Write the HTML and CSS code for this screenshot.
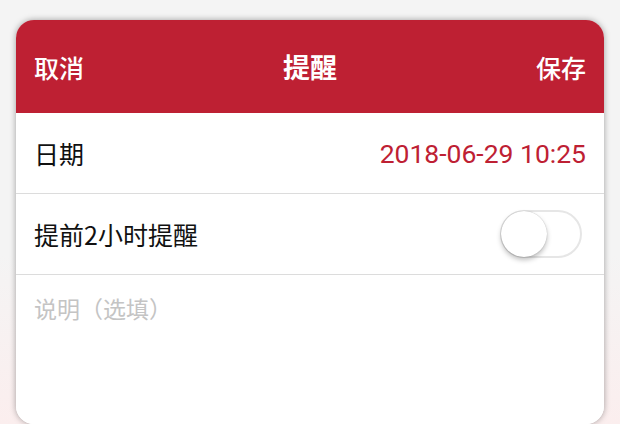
FILE: index.html
```html
<!DOCTYPE html>
<html lang="zh-CN">
<head>
  <meta charset="UTF-8" />
  <meta name="viewport" content="width=device-width, initial-scale=1" />
  <title>提醒</title>
  <link rel="stylesheet" href="styles.css">
</head>
<body>
  <div class="sheet">
    <div class="header">
      <button type="button" class="header-btn">取消</button>
      <h2>提醒</h2>
      <button type="button" class="header-btn">保存</button>
    </div>
    <div class="row">
      <span class="label">日期</span>
      <span class="date">2018-06-29 10:25</span>
    </div>
    <div class="row">
      <span class="label">提前2小时提醒</span>
      <label class="switch">
        <input type="checkbox" id="remind">
        <span class="knob"></span>
      </label>
    </div>
    <textarea class="note" placeholder="说明（选填）"></textarea>
  </div>
</body>
</html>
```

FILE: styles.css
```css
body {
  font-family: "Noto Sans CJK SC", "Noto Sans", sans-serif;
  margin: 0;
  padding: 20px 16px 0;
  background: linear-gradient(#f4f4f4 60%, #fbeeee);
  color: #111;
  height: 404px;
  overflow: hidden;
}
.sheet {
  background: #fff;
  border-radius: 18px;
  box-shadow: 0 0 6px rgba(0, 0, 0, 0.35);
  overflow: hidden;
  height: 404px;
  display: flex;
  flex-direction: column;
}
.header {
  background: #be2033;
  height: 93px;
  display: flex;
  align-items: center;
  justify-content: space-between;
  padding: 0 18px;
  color: #fff;
}
.header h2 {
  margin: 0;
  font-size: 27px;
  font-weight: 700;
}
.header-btn {
  background: none;
  border: none;
  padding: 0;
  color: #fff;
  font-family: inherit;
  font-size: 25px;
  font-weight: 500;
  cursor: pointer;
}
.row {
  height: 80px;
  display: flex;
  align-items: center;
  justify-content: space-between;
  padding: 0 18px;
  border-bottom: 1px solid #dcdcdc;
  font-size: 25px;
}
.date {
  font-family: Roboto, sans-serif;
  font-size: 26.5px;
  color: #be2033;
}
.switch {
  position: relative;
  width: 82px;
  height: 48px;
  margin-right: 4px;
}
.switch input {
  display: none;
}
.knob {
  position: absolute;
  inset: 0;
  border: 2px solid #e6e6e6;
  border-radius: 24px;
  box-sizing: border-box;
}
.knob::before {
  content: "";
  position: absolute;
  left: -1px;
  top: -1px;
  width: 46px;
  height: 46px;
  border-radius: 50%;
  background: #fff;
  box-shadow: 0 3px 5px rgba(0, 0, 0, 0.25), 0 0 1px rgba(0, 0, 0, 0.3);
}
.note {
  flex: 1;
  border: none;
  resize: none;
  outline: none;
  padding: 16px 18px;
  font-family: inherit;
  font-size: 23px;
  color: #333;
}
.note::placeholder {
  color: #c4c4c4;
}
```
